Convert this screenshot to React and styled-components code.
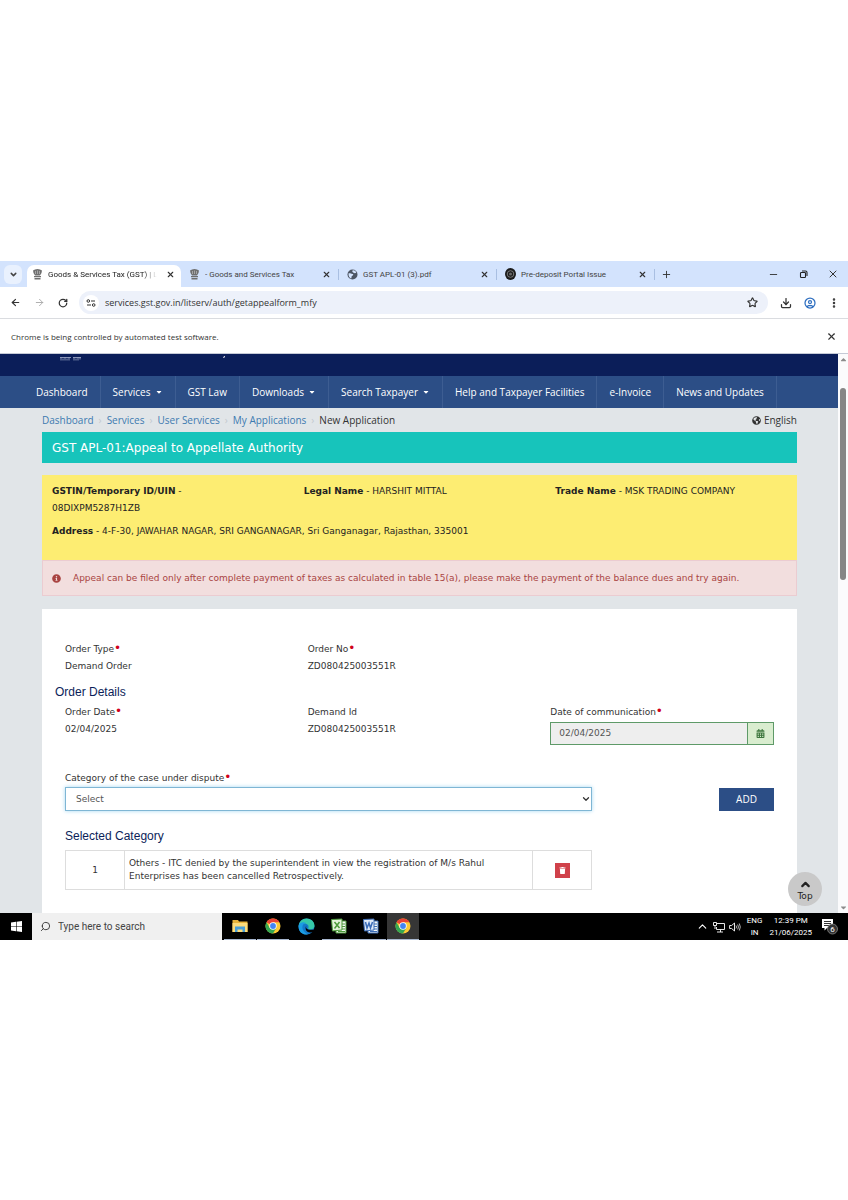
import React from "react";
import styled, { createGlobalStyle, css } from "styled-components";
import {
  ArrowLeft,
  ArrowRight,
  ChevronDown,
  ChevronUp,
  CircleUser,
  Download,
  EllipsisVertical,
  Minus,
  Plus,
  RotateCw,
  Search,
  Star,
  X,
} from "lucide-react";
import {
  FaCalendarAlt,
  FaCaretDown,
  FaCaretUp,
  FaGlobeAmericas,
  FaInfoCircle,
  FaTrash,
} from "react-icons/fa";

const sans = `"DejaVu Sans", sans-serif`;
const ui = `"Open Sans", "Noto Sans", sans-serif`;
const narrow = `Roboto, "Open Sans", sans-serif`;

const GlobalStyle = createGlobalStyle`
  * {
    box-sizing: border-box;
  }

  body {
    margin: 0;
    background: #fff;
    color: #333;
    font-family: ${sans};
    font-size: 9px;
  }

  button,
  input,
  select {
    margin: 0;
    font: inherit;
    color: inherit;
  }

  a {
    text-decoration: none;
  }
`;

const Desktop = styled.div`
  padding: 261px 0 260px;
`;

/* ---------- browser ---------- */

const IconButton = styled.button`
  display: flex;
  align-items: center;
  justify-content: center;
  flex: none;
  width: 16px;
  height: 16px;
  padding: 0;
  border: 0;
  background: none;
  color: ${(props) => props.$color || "#333"};
`;

const TabStrip = styled.div`
  display: flex;
  align-items: flex-end;
  height: 26px;
  padding: 0 4px;
  background: #d3e3fd;
  font-family: ${narrow};
  font-size: 8px;
  color: #444;
`;

const TabSearch = styled.button`
  display: flex;
  align-items: center;
  justify-content: center;
  flex: none;
  width: 18px;
  height: 19px;
  margin: 0 5px 3px 0;
  padding: 0;
  border: 0;
  border-radius: 6px;
  background: #e9f1fe;
`;

const Tab = styled.div`
  display: flex;
  align-items: center;
  gap: 5px;
  flex: 0 1 158px;
  min-width: 0;
  height: 26px;
  padding: 0 5px 0 8px;

  ${(props) =>
    props.$active
      ? css`
          flex-basis: 154px;
          height: 22px;
          padding: 0 3px 3px 5px;
          border-radius: 7px 7px 0 0;
          background: #fff;
          color: #222;
        `
      : css`
          background: linear-gradient(#a9bfe2, #a9bfe2) right center / 1px 11px
            no-repeat;
        `}

  svg {
    flex: none;
  }
`;

const TabTitle = styled.span`
  flex: 1;
  min-width: 0;
  overflow: hidden;
  white-space: nowrap;
  ${(props) =>
    props.$fade && "mask-image: linear-gradient(90deg, #000 88%, transparent);"}
`;

const WindowButtons = styled.div`
  display: flex;
  gap: 14px;
  margin: 0 3px 5px auto;
`;

const NewTab = styled(IconButton)`
  margin: 0 0 5px 3px;
`;

const Toolbar = styled.div`
  display: flex;
  align-items: center;
  gap: 8px;
  height: 32px;
  padding: 0 6px 0 7px;
  border-bottom: 1px solid #dadce0;
  background: #fff;
`;

const AddressBar = styled.div`
  display: flex;
  align-items: center;
  flex: 1;
  gap: 6px;
  height: 23px;
  margin-right: 2px;
  padding: 0 8px 0 4px;
  border-radius: 12px;
  background: #edf1fa;
`;

const SiteButton = styled(IconButton)`
  border-radius: 50%;
  background: #fff;
`;

const Address = styled.input`
  flex: 1;
  min-width: 0;
  padding: 0;
  border: 0;
  outline: 0;
  background: none;
  font-family: ${ui};
  font-size: 9px;
`;

const InfoBar = styled.div`
  display: flex;
  align-items: center;
  justify-content: space-between;
  height: 35px;
  padding: 0 9px 0 11px;
  border-bottom: 1px solid #c5cad6;
  background: #fff;
  font-family: ${ui};
  font-size: 8px;
`;

const Viewport = styled.div`
  position: relative;
  display: flex;
`;

const Page = styled.div`
  flex: 1;
  min-width: 0;
  background: #e1e5e8;
`;

const Scrollbar = styled.div`
  display: flex;
  flex-direction: column;
  align-items: center;
  width: 10px;
  padding: 1px 0;
  background: #fbfbfc;
  color: #8b8b8b;
`;

const Thumb = styled.div`
  width: 6px;
  height: 192px;
  margin: 24px 0 auto;
  border-radius: 3px;
  background: #868686;
`;

/* ---------- portal ---------- */

const Banner = styled.div`
  height: 22px;
  padding-left: 59px;
  background: #0b1e59;
`;

const Nav = styled.nav`
  display: flex;
  height: 32px;
  padding-left: 24px;
  background: #2c4e86;
  font-family: ${ui};
  font-size: 10px;
  font-weight: 500;
`;

const NavLink = styled.a`
  display: flex;
  align-items: center;
  gap: 4px;
  padding: 0 12px;
  border-right: 1px solid #3d5d92;
  color: #fff;
  white-space: nowrap;
`;

const Container = styled.div`
  padding: 0 41px 0 42px;
`;

const TopLine = styled.div`
  display: flex;
  align-items: center;
  justify-content: space-between;
  height: 24px;
  font-family: ${ui};
  font-size: 10px;
`;

const Crumbs = styled.nav`
  display: flex;

  a {
    color: #3d7ab0;
  }

  a::after {
    content: "›";
    padding: 0 5px;
    color: #c3c9cf;
  }
`;

const Language = styled.button`
  display: flex;
  align-items: center;
  gap: 3px;
  padding: 0;
  border: 0;
  background: none;
`;

const Title = styled.h1`
  display: flex;
  align-items: center;
  height: 31px;
  margin: 0 0 12px;
  padding: 0 10px;
  background: #17c4bb;
  color: #fff;
  font-size: 12px;
  font-weight: 500;
`;

const Taxpayer = styled.div`
  display: grid;
  grid-template-columns: repeat(3, 1fr);
  align-content: start;
  row-gap: 6px;
  padding: 8px 0 20px;
  background: #fded72;
  color: #222;
  line-height: 17px;

  p {
    margin: 0;
    padding: 0 10px;
  }

  p:last-child {
    grid-column: 1 / -1;
  }
`;

const Alert = styled.div`
  display: flex;
  align-items: center;
  gap: 12px;
  height: 36px;
  margin-bottom: 13px;
  padding: 0 9px;
  border: 1px solid #ebccd1;
  background: #f2dede;
  color: #a94442;
`;

const Card = styled.main`
  padding: 32px 23px 23px;
  background: #fff;
`;

const Row = styled.div`
  display: grid;
  grid-template-columns: repeat(3, 1fr);
  column-gap: 19px;
  line-height: 17px;
`;

const WideRow = styled(Row)`
  grid-template-columns: 3fr 1fr;
  column-gap: 6px;
`;

const Label = styled.label`
  display: block;

  &::after {
    content: ${(props) => (props.$required ? '"•"' : "none")};
    color: #d0021b;
    font-size: 12px;
    line-height: 1px;
  }
`;

const CategoryLabel = styled(Label)`
  margin-top: 25px;
  line-height: 17px;
`;

const Heading = styled.h2`
  margin: ${(props) => props.$margin};
  color: #0b1e59;
  font-family: "Liberation Sans", sans-serif;
  font-size: 12px;
  font-weight: 400;
  line-height: 16px;
`;

const DateBox = styled.div`
  display: flex;
  height: 23px;
  margin-top: 1px;
  border: 1px solid #5e9a68;

  input {
    flex: 1;
    min-width: 0;
    padding: 0 8px;
    border: 0;
    background: #eee;
    color: #555;
  }

  button {
    display: flex;
    align-items: center;
    justify-content: center;
    width: 26px;
    padding: 0;
    border: 0;
    border-left: 1px solid #5e9a68;
    background: #d9edcf;
    color: #3c763d;
  }
`;

const SelectBox = styled.div`
  position: relative;

  select {
    display: block;
    width: 100%;
    height: 24px;
    padding: 0 10px;
    border: 1px solid #7fb6d4;
    border-radius: 0;
    outline: 0;
    background: #fff;
    box-shadow: 0 0 4px #a5d8f3;
    color: #555;
    appearance: none;
  }

  svg {
    position: absolute;
    top: 7px;
    right: 1px;
    pointer-events: none;
  }
`;

const AddButton = styled.button`
  align-self: center;
  justify-self: end;
  width: 55px;
  height: 23px;
  border: 0;
  background: #2c4e86;
  color: #fff;
  font-family: ${ui};
  font-size: 10px;
  font-weight: 500;
`;

const Table = styled.table`
  width: 100%;
  border-collapse: collapse;
  line-height: 13px;

  td {
    height: 39px;
    padding: 0 4px;
    border: 1px solid #ddd;
  }

  td:first-child,
  td:last-child {
    width: 59px;
    text-align: center;
  }
`;

const DeleteButton = styled.button`
  display: inline-flex;
  align-items: center;
  justify-content: center;
  width: 15px;
  height: 15px;
  padding: 0;
  border: 0;
  background: #d0414a;
  color: #fff;
  vertical-align: middle;
`;

const TopButton = styled.button`
  position: absolute;
  right: 26px;
  bottom: 7px;
  display: flex;
  flex-direction: column;
  align-items: center;
  justify-content: center;
  width: 34px;
  height: 34px;
  padding: 0;
  border: 0;
  border-radius: 50%;
  background: #c9c9c9;
  color: #222;
  line-height: 10px;
`;

/* ---------- taskbar ---------- */

const Taskbar = styled.footer`
  display: flex;
  align-items: stretch;
  height: 27px;
  background: #000;
  color: #fff;
  font-family: ${narrow};
`;

const TaskButton = styled.button`
  display: flex;
  align-items: center;
  justify-content: center;
  width: 32px;
  margin-right: ${(props) => (props.$last ? 0 : 1)}px;
  padding: 0;
  border: 0;
  border-bottom: 1px solid ${(props) => (props.$open ? "#a9b8d0" : "#000")};
  background: ${(props) => (props.$active ? "#363636" : "#000")};
`;

const SearchBox = styled.label`
  display: flex;
  align-items: center;
  gap: 7px;
  flex: 0 0 190px;
  margin-right: 2px;
  padding: 0 8px;
  background: #f0f0f0;
  color: #333;
  font-size: 10px;

  input {
    flex: 1;
    min-width: 0;
    padding: 0;
    border: 0;
    background: none;
  }

  input::placeholder {
    color: #444;
    opacity: 1;
  }
`;

const Tray = styled.div`
  display: flex;
  align-items: center;
  gap: 4px;
  margin-left: auto;
  padding-right: 10px;
  font-size: 8px;
  line-height: 12px;
  text-align: center;
`;

const Locale = styled.div`
  padding: 0 3px 0 2px;
`;

const Clock = styled.div`
  padding-right: 5px;
`;

/* ---------- drawings ---------- */

const Emblem = () => (
  <svg width="11" height="11" viewBox="0 0 11 11" fill="#6f6f6f">
    <path d="M1 1.5 3 0.5 5.5 0 8 0.5 10 1.5 9.5 4 8 6.5H3L1.5 4Z" />
    <path d="M2 7h7v1.300H2zM2.500 9h6v1.500h-6z" />
    <path d="M3.500 2v3M5.500 1.500V5M7.500 2v3" stroke="#c9c9c9" strokeWidth=".6" />
  </svg>
);

const EmblemFoot = () => (
  <svg width="170" height="6" viewBox="0 0 170 6" fill="none" stroke="#aab3cf">
    <path d="M1 1.500h11M14 1.500h8" strokeWidth=".8" />
    <path
      d="M2 1.500v3M4 2.500v2M6 1.500v3M8 2.500v2M10 1.500v3M15 1.500v3M17 2.500v2M19 1.500v3M21 1.500v2"
      strokeWidth=".8"
    />
    <path d="m165.500 0-.800 2" stroke="#fff" />
  </svg>
);

const Globe = () => (
  <svg width="11" height="11" viewBox="0 0 11 11">
    <circle cx="5.500" cy="5.500" r="5" fill="#4c5563" />
    <path
      d="M1.500 4.500C3 4 4 5 5.500 5S6 6.500 5 7s0 2-1 2.500C2.500 9 1.300 7 1.500 4.500ZM5.500 1.500c1.500-.5 3 .5 3.800 2-.8 1-2 .8-2.800.2S5 3 5.500 1.500Z"
      fill="#d3e3fd"
    />
  </svg>
);

const Seal = () => (
  <svg width="11" height="12" viewBox="0 0 11 12" fill="none">
    <ellipse cx="5.500" cy="6" rx="5.500" ry="5.900" fill="#1b1b1b" />
    <circle cx="5.500" cy="6" r="3.300" stroke="#777" />
    <circle cx="5.500" cy="6" r="1.500" fill="#666" />
  </svg>
);

const Tune = () => (
  <svg width="10" height="10" viewBox="0 0 10 10" fill="none" stroke="#333">
    <circle cx="2.300" cy="3" r="1.300" />
    <path d="M5 3h4M1 7h4" strokeWidth="1.200" />
    <circle cx="7.700" cy="7" r="1.300" />
  </svg>
);

const Restore = () => (
  <svg width="9" height="9" viewBox="0 0 9 9" fill="none" stroke="#222">
    <rect x="1.500" y="2.500" width="5" height="5" rx=".8" strokeWidth="1.100" />
    <path d="M3 1h3.500Q8 1 8 2.500V6" strokeWidth="1.100" />
  </svg>
);

const Chrome = () => (
  <svg width="16" height="16" viewBox="0 0 16 16">
    <circle cx="8" cy="8" r="7.500" fill="#fcc934" />
    <path d="M8 8 1.500 4.250A7.500 7.500 0 0 1 14.500 4.250H8Z" fill="#ea4335" />
    <path
      d="M1.500 4.250A7.500 7.500 0 0 0 8 15.500L11.250 9.900 8 8 4.750 9.900Z"
      fill="#34a853"
    />
    <circle cx="8" cy="8" r="3.700" fill="#fff" />
    <circle cx="8" cy="8" r="2.900" fill="#4285f4" />
  </svg>
);

const Edge = () => (
  <svg width="17" height="17" viewBox="0 0 17 17">
    <circle cx="8.500" cy="8.500" r="8" fill="#1478c9" />
    <path
      d="M.6 8C1 3.500 4.500.5 8.500.5c4.500 0 8 3.300 8 7 0 2.500-2 4-4 4-1.500 0-2.500-.5-2.300-1.200C11.500 8 9.500 5.500 6.500 5.500 3.500 5.500 1 6.500.6 8Z"
      fill="#35c8a8"
    />
    <path
      d="M.6 8C1 4.500 5 3.500 8 5c-3 .5-4 3-3.500 5.500S8 15.500 10 16.300C5 17.500 0 13.500.6 8Z"
      fill="#1b9de2"
    />
    <path
      d="M8.500 7.500c-1.500 3 1 5.500 8.500 3.800v2.200c-1.500 1-3.700 1-5 1-4 0-5.500-4.500-3.500-7Z"
      fill="#000"
    />
  </svg>
);

const Folder = () => (
  <svg width="16" height="14" viewBox="0 0 16 14">
    <path d="M.5 1h5.500l1 1.500h8.500V13H.5Z" fill="#e8b43b" />
    <path d="M.5 4h15v9H.5Z" fill="#fbdc7c" />
    <path d="M3 7.500h10V13h-2.500v-2.500h-5V13H3Z" fill="#4aa0d8" />
  </svg>
);

const OfficeDoc = ({ color, light, mark }) => (
  <svg width="17" height="16" viewBox="0 0 17 16" fill="none">
    <path d="M6 3h10v12H6Z" fill="#f4f8f4" stroke={color} />
    <path d="M12 6h3M12 8.500h3M12 11h3M8 13.500h7" stroke={color} />
    <path d="M1.500 1.500 12 1v11L2.500 13Z" fill={light} stroke={color} />
    <path d={mark} stroke={color} strokeWidth="1.500" />
  </svg>
);

const Start = () => (
  <svg width="11" height="11" viewBox="0 0 11 11" fill="#fff">
    <path d="M0 1.500 5 .8v4.400H0ZM5.600.7 11 0v5.200H5.600ZM0 5.800h5v4.400L0 9.500ZM5.600 5.800H11V11l-5.400-.7Z" />
  </svg>
);

const Network = () => (
  <svg width="12" height="12" viewBox="0 0 12 12" fill="none" stroke="#fff">
    <path d="M4 2.500h7.500v6H3.500V6M4 11h6M7.500 8.500V11" strokeWidth=".9" />
    <path d="M.5 1.500h3v3h-3ZM2 4.500V8" strokeWidth=".9" />
  </svg>
);

const Speaker = () => (
  <svg width="12" height="12" viewBox="0 0 12 12" fill="none" stroke="#fff">
    <path d="M.6 4.500h2L5.500 2v8L2.600 7.500h-2Z" strokeWidth=".9" />
    <path
      d="M7 4.500q1 1.500 0 3M8.700 3.500q1.500 2.500 0 5M10.300 2.500q2 3.500 0 7"
      strokeWidth=".7"
    />
  </svg>
);

const Notices = () => (
  <svg width="17" height="17" viewBox="0 0 17 17">
    <path d="M1 1h11v9H6l-2.500 2.500V10H1Z" fill="#fff" />
    <path d="M3 3.500h7M3 5.500h7M3 7.500h5" stroke="#000" strokeWidth=".8" />
    <circle cx="11.500" cy="11" r="5" fill="#333" stroke="#888" strokeWidth=".8" />
    <text x="11.500" y="14" fill="#fff" fontSize="8" textAnchor="middle">
      6
    </text>
  </svg>
);

/* ---------- data ---------- */

const tabs = [
  { title: "Goods & Services Tax (GST) | Lit", icon: <Emblem />, active: true },
  { title: "- Goods and Services Tax", icon: <Emblem /> },
  { title: "GST APL-01 (3).pdf", icon: <Globe /> },
  { title: "Pre-deposit Portal Issue", icon: <Seal /> },
];

const menu = [
  { name: "Dashboard" },
  { name: "Services", more: true },
  { name: "GST Law" },
  { name: "Downloads", more: true },
  { name: "Search Taxpayer", more: true },
  { name: "Help and Taxpayer Facilities" },
  { name: "e-Invoice" },
  { name: "News and Updates" },
];

const crumbs = ["Dashboard", "Services", "User Services", "My Applications"];

const Browser = () => (
  <header>
    <TabStrip>
      <TabSearch aria-label="Search tabs">
        <ChevronDown size={9} strokeWidth={4} />
      </TabSearch>
      {tabs.map((tab) => (
        <Tab key={tab.title} $active={tab.active}>
          {tab.icon}
          <TabTitle $fade={tab.active}>{tab.title}</TabTitle>
          <IconButton aria-label="Close tab">
            <X size={9} strokeWidth={3} />
          </IconButton>
        </Tab>
      ))}
      <NewTab aria-label="New tab">
        <Plus size={11} strokeWidth={2} />
      </NewTab>
      <WindowButtons>
        <IconButton aria-label="Minimise">
          <Minus size={11} />
        </IconButton>
        <IconButton aria-label="Restore">
          <Restore />
        </IconButton>
        <IconButton aria-label="Close">
          <X size={12} />
        </IconButton>
      </WindowButtons>
    </TabStrip>
    <Toolbar>
      <IconButton aria-label="Back">
        <ArrowLeft size={11} strokeWidth={2.5} />
      </IconButton>
      <IconButton aria-label="Forward" $color="#a8a8a8">
        <ArrowRight size={11} />
      </IconButton>
      <IconButton aria-label="Reload">
        <RotateCw size={10} strokeWidth={3} />
      </IconButton>
      <AddressBar>
        <SiteButton aria-label="Site information">
          <Tune />
        </SiteButton>
        <Address
          aria-label="Address"
          defaultValue="services.gst.gov.in/litserv/auth/getappealform_mfy"
        />
        <IconButton aria-label="Bookmark">
          <Star size={11} strokeWidth={2.5} />
        </IconButton>
      </AddressBar>
      <IconButton aria-label="Downloads">
        <Download size={12} strokeWidth={2.5} />
      </IconButton>
      <IconButton aria-label="Profile" $color="#2f6fc0">
        <CircleUser size={12} strokeWidth={2.5} />
      </IconButton>
      <IconButton aria-label="Menu">
        <EllipsisVertical size={12} strokeWidth={3} />
      </IconButton>
    </Toolbar>
    <InfoBar>
      <span>Chrome is being controlled by automated test software.</span>
      <IconButton aria-label="Dismiss">
        <X size={11} strokeWidth={2.5} />
      </IconButton>
    </InfoBar>
  </header>
);

const Portal = () => (
  <Page>
    <Banner>
      <EmblemFoot />
    </Banner>
    <Nav>
      {menu.map((item) => (
        <NavLink key={item.name} href="#">
          {item.name}
          {item.more && <FaCaretDown size={8} />}
        </NavLink>
      ))}
    </Nav>
    <Container>
      <TopLine>
        <Crumbs>
          {crumbs.map((name) => (
            <a key={name} href="#">
              {name}
            </a>
          ))}
          <span>New Application</span>
        </Crumbs>
        <Language>
          <FaGlobeAmericas size={9} /> English
        </Language>
      </TopLine>
      <Title>GST APL-01:Appeal to Appellate Authority</Title>
      <Taxpayer>
        <p>
          <b>GSTIN/Temporary ID/UIN</b> -<br />
          08DIXPM5287H1ZB
        </p>
        <p>
          <b>Legal Name</b> - HARSHIT MITTAL
        </p>
        <p>
          <b>Trade Name</b> - MSK TRADING COMPANY
        </p>
        <p>
          <b>Address</b> - 4-F-30, JAWAHAR NAGAR, SRI GANGANAGAR, Sri
          Ganganagar, Rajasthan, 335001
        </p>
      </Taxpayer>
      <Alert role="alert">
        <FaInfoCircle size={9} />
        <span>
          Appeal can be filed only after complete payment of taxes as calculated
          in table 15(a), please make the payment of the balance dues and try
          again.
        </span>
      </Alert>
      <Card>
        <Row>
          <div>
            <Label as="span" $required>
              Order Type
            </Label>
            Demand Order
          </div>
          <div>
            <Label as="span" $required>
              Order No
            </Label>
            ZD080425003551R
          </div>
        </Row>
        <Heading $margin="9px 0 4px -10px">Order Details</Heading>
        <Row>
          <div>
            <Label as="span" $required>
              Order Date
            </Label>
            02/04/2025
          </div>
          <div>
            <Label as="span">Demand Id</Label>
            ZD080425003551R
          </div>
          <div>
            <Label htmlFor="communication" $required>
              Date of communication
            </Label>
            <DateBox>
              <input id="communication" defaultValue="02/04/2025" readOnly />
              <button aria-label="Open calendar">
                <FaCalendarAlt size={9} />
              </button>
            </DateBox>
          </div>
        </Row>
        <CategoryLabel htmlFor="category" $required>
          Category of the case under dispute
        </CategoryLabel>
        <WideRow>
          <SelectBox>
            <select id="category">
              <option>Select</option>
            </select>
            <ChevronDown size={10} strokeWidth={3} />
          </SelectBox>
          <AddButton>ADD</AddButton>
        </WideRow>
        <Heading $margin="17px 0 6px">Selected Category</Heading>
        <WideRow>
          <Table>
            <tbody>
              <tr>
                <td>1</td>
                <td>
                  Others - ITC denied by the superintendent in view the
                  registration of M/s Rahul Enterprises has been cancelled
                  Retrospectively.
                </td>
                <td>
                  <DeleteButton aria-label="Delete category">
                    <FaTrash size={7} />
                  </DeleteButton>
                </td>
              </tr>
            </tbody>
          </Table>
        </WideRow>
      </Card>
    </Container>
  </Page>
);

const WindowsBar = () => (
  <Taskbar>
    <TaskButton aria-label="Start" $last>
      <Start />
    </TaskButton>
    <SearchBox>
      <Search size={11} transform="scale(-1 1)" />
      <input aria-label="Search" placeholder="Type here to search" />
    </SearchBox>
    <TaskButton aria-label="File Explorer" $open>
      <Folder />
    </TaskButton>
    <TaskButton aria-label="Chrome" $open>
      <Chrome />
    </TaskButton>
    <TaskButton aria-label="Edge" $last>
      <Edge />
    </TaskButton>
    <TaskButton aria-label="Excel" $open $last>
      <OfficeDoc color="#4c9a3a" light="#e3f2d9" mark="m4.500 4 5 6M9.500 4l-5 6.500" />
    </TaskButton>
    <TaskButton aria-label="Word" $open>
      <OfficeDoc
        color="#3b6cb8"
        light="#e1ebf8"
        mark="m3.500 4 1.500 6 2-5 1.500 5L10.500 4"
      />
    </TaskButton>
    <TaskButton aria-label="Chrome test window" $open $active>
      <Chrome />
    </TaskButton>
    <Tray>
      <ChevronUp size={13} />
      <Network />
      <Speaker />
      <Locale>
        ENG
        <br />
        IN
      </Locale>
      <Clock>
        12:39 PM
        <br />
        21/06/2025
      </Clock>
      <Notices />
    </Tray>
  </Taskbar>
);

const App = () => (
  <Desktop>
    <GlobalStyle />
    <Browser />
    <Viewport>
      <Portal />
      <Scrollbar>
        <FaCaretUp size={9} />
        <Thumb />
        <FaCaretDown size={9} />
      </Scrollbar>
      <TopButton>
        <ChevronUp size={13} strokeWidth={4} />
        Top
      </TopButton>
    </Viewport>
    <WindowsBar />
  </Desktop>
);

export default App;
